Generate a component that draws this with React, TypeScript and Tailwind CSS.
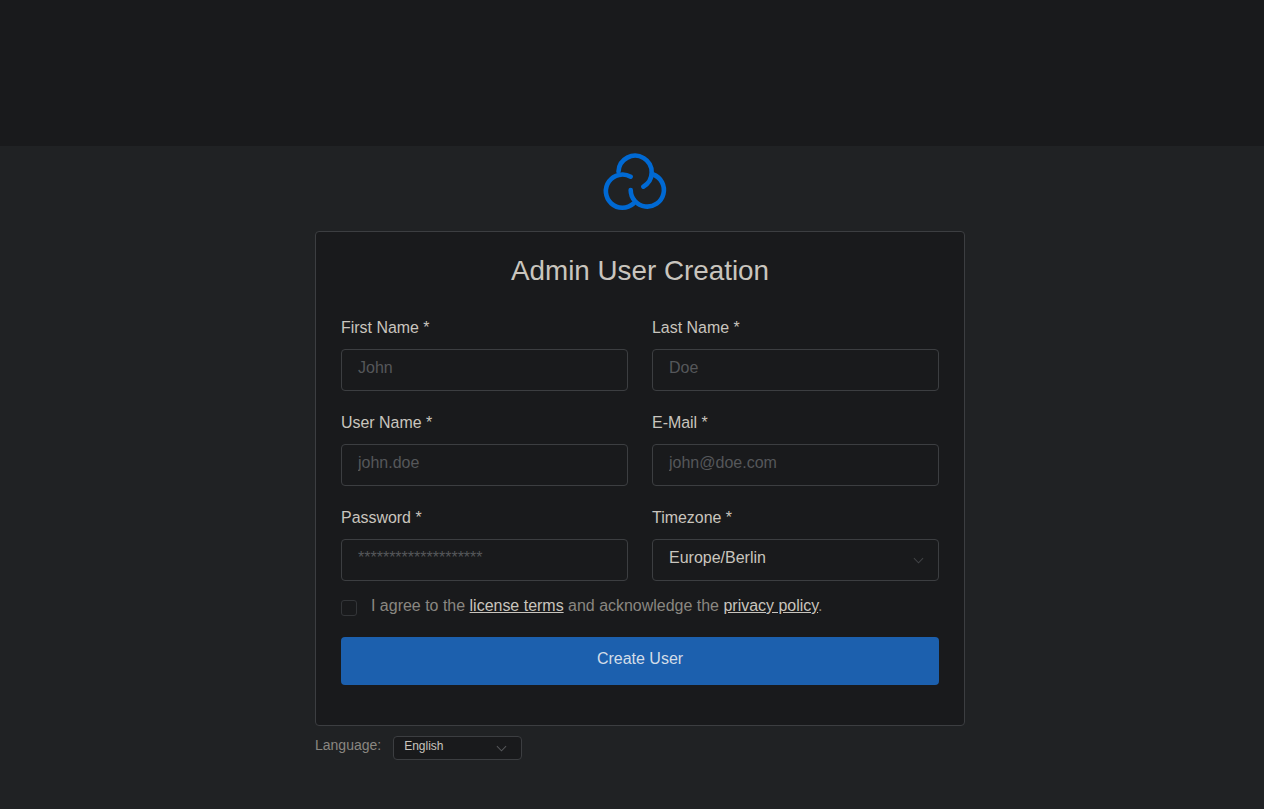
const inputClass =
  "w-full h-[42px] rounded-[4px] border border-[#3c3e41] bg-transparent px-4 pb-1 text-[16px] text-[#c9c5be] placeholder-[#55575a] outline-none";

const labelClass =
  "block h-6 mb-2.5 pt-px text-[15.95px] leading-6 text-[#c9c5be]";

function Field({
  label,
  placeholder,
  type = "text",
}: {
  label: string;
  placeholder: string;
  type?: string;
}) {
  return (
    <div>
      <label className={labelClass}>{label}</label>
      <input type={type} placeholder={placeholder} className={inputClass} />
    </div>
  );
}

function Chevron({ className }: { className: string }) {
  return (
    <svg viewBox="0 0 12 7" fill="none" className={className}>
      <path d="M1 1l5 5 5-5" stroke="currentColor" strokeWidth="1.1" />
    </svg>
  );
}

function Logo() {
  return (
    <svg
      viewBox="0 0 80 64"
      fill="none"
      stroke="#0069d3"
      strokeWidth="4.6"
      strokeLinecap="round"
      className="w-20 h-16"
    >
      <path d="M18.5 21.5 A16.6 16.6 0 1 1 43.3 36.7" />
      <path d="M30.7 26.7 A16.6 16.6 0 1 0 33.5 53.5" />
      <path d="M30.7 40 A16.6 16.6 0 1 0 53.3 24.5" />
    </svg>
  );
}

export default function App() {
  return (
    <div className="min-h-screen bg-[#202224] font-['Liberation_Sans',Arial,sans-serif]">
      <div className="h-[146px] bg-[#191a1c]" />
      <div className="flex flex-col items-center pl-4 pt-[4px]">
        <Logo />
        <div className="w-[650px] mt-[17px]">
          <form className="h-[495px] rounded-[4px] border border-[#3c3e41] bg-[#191a1c] px-[25px] pt-[23px]">
            <h1 className="h-8 mb-[28px] text-center text-[27.8px] leading-8 font-normal text-[#c9c5be]">
              Admin User Creation
            </h1>
            <div className="grid grid-cols-2 gap-x-6 gap-y-[19px]">
              <Field label="First Name *" placeholder="John" />
              <Field label="Last Name *" placeholder="Doe" />
              <Field label="User Name *" placeholder="john.doe" />
              <Field label="E-Mail *" placeholder="john@doe.com" />
              <Field
                label="Password *"
                type="text"
                placeholder="********************"
              />
              <div>
                <label className={labelClass}>Timezone *</label>
                <div className="relative">
                  <select className={inputClass + " appearance-none"}>
                    <option>Europe/Berlin</option>
                  </select>
                  <Chevron className="absolute right-[15px] top-[18px] w-[11px] h-[7px] text-[#414346]" />
                </div>
              </div>
            </div>
            <div className="flex items-center gap-3.5 mt-[13px] h-6 text-[15.98px] text-[#8a8781]">
              <input
                type="checkbox"
                className="appearance-none w-4 h-4 mt-[3px] rounded-[3px] border border-[#333538]"
              />
              <span>
                I agree to the{" "}
                <a className="underline text-[#c9c5be]">license terms</a> and
                acknowledge the{" "}
                <a className="underline text-[#c9c5be]">privacy policy</a>.
              </span>
            </div>
            <button
              type="button"
              className="block w-full h-12 mt-[19px] pb-1 rounded-[4px] bg-[#1c60ae] text-[16px] text-[#d3dde8]"
            >
              Create User
            </button>
          </form>
          <div className="flex items-center mt-2.5 h-6 text-[14px] text-[#8a8781]">
            <span className="pb-1.5">Language:</span>
            <div className="relative ml-3">
              <select className="appearance-none block w-[129px] h-6 pb-1 rounded-[4px] border border-[#3c3e41] bg-[#191a1c] pl-2.5 text-[12px] text-[#c9c5be] outline-none">
                <option>English</option>
              </select>
              <Chevron className="absolute right-[15px] top-[9px] w-[11px] h-[7px] text-[#55575a]" />
            </div>
          </div>
        </div>
      </div>
    </div>
  );
}
